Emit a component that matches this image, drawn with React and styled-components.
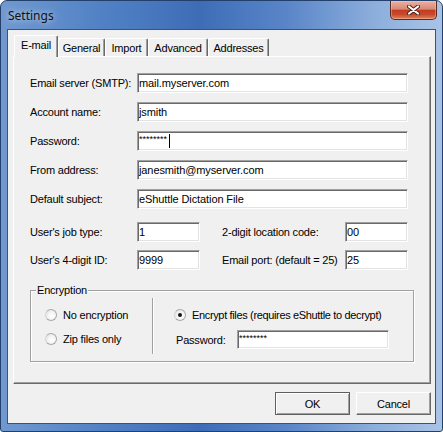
import React from 'react';
import styled, { createGlobalStyle } from 'styled-components';

const GlobalStyle = createGlobalStyle`
  html, body {
    margin: 0;
    padding: 0;
    background: #fff;
    overflow: hidden;
  }
  body {
    font-family: "Liberation Sans", Arial, sans-serif;
    font-size: 11px;
    color: #000;
  }
  *, *::before, *::after {
    box-sizing: border-box;
  }
`;

// Window chrome
const Frame = styled.div`
  width: 443px;
  height: 432px;
  border: 1px solid #22406a;
  border-radius: 7px 7px 3px 3px;
  background: linear-gradient(90deg, #7199d0 0%, #5282c5 22%, #3e6db7 45%, #5a86c8 65%, #8dafdc 85%, #a9c3e6 100%);
  display: flex;
  flex-direction: column;
`;

const TitleBar = styled.div`
  height: 28px;
  flex-shrink: 0;
  display: flex;
  justify-content: space-between;
  align-items: flex-start;
  padding: 0 5px 0 7px;
`;

const Title = styled.span`
  margin-top: 7px;
  font-family: "Noto Sans", "Open Sans", sans-serif;
  font-size: 12px;
  line-height: 16px;
  color: #111;
  text-shadow: 0 0 6px rgba(255, 255, 255, 0.8);
`;

const CloseButton = styled.div`
  width: 47px;
  height: 19px;
  border: 1px solid #5a2a20;
  border-top: none;
  border-radius: 0 0 5px 5px;
  background: linear-gradient(180deg, #eab0a2 0%, #d98a76 45%, #c33c22 52%, #c84a2c 75%, #e28358 100%);
  box-shadow: inset 0 0 0 1px rgba(255, 220, 210, 0.35);
  display: flex;
  align-items: center;
  justify-content: center;
`;

const Client = styled.div`
  flex: 1;
  margin: 0 6px 7px 6px;
  border: 1px solid #36557c;
  background: #f0f0f0;
  padding: 5px 4px 0 5px;
  display: flex;
  flex-direction: column;
`;

// Tabs
const TabStrip = styled.div`
  height: 21px;
  display: flex;
  align-items: flex-end;
  padding-left: 1px;
  position: relative;
  z-index: 1;
`;

const Tab = styled.div`
  width: ${p => p.$w}px;
  height: ${p => (p.$active ? 22 : 18)}px;
  margin-bottom: ${p => (p.$active ? -1 : 0)}px;
  background: #f0f0f0;
  border-top: 1px solid #fff;
  border-left: 1px solid #fff;
  border-right: 1px solid #696969;
  border-radius: 2px 2px 0 0;
  box-shadow: inset -1px 0 0 #a0a0a0;
  display: flex;
  align-items: center;
  justify-content: center;
  padding-bottom: ${p => (p.$active ? 3 : 0)}px;
  letter-spacing: -0.2px;
`;

const Panel = styled.div`
  height: 328px;
  border-top: 1px solid #fff;
  border-left: 1px solid #fff;
  border-right: 1px solid #696969;
  border-bottom: 1px solid #696969;
  box-shadow: inset -1px -1px 0 #a0a0a0;
  padding: 16px 22px 0 16px;
  display: flex;
  flex-direction: column;
`;

// Form parts
const Fields = styled.div`
  display: grid;
  grid-template-columns: 107px 1fr;
  grid-auto-rows: 20px;
  row-gap: 9px;
  align-items: center;
`;

const ShortFields = styled.div`
  margin-top: 13px;
  display: grid;
  grid-template-columns: 107px 63px 1fr 63px;
  grid-auto-rows: 20px;
  row-gap: 8px;
  align-items: center;
`;

const Label = styled.span`
  letter-spacing: -0.2px;
  white-space: nowrap;
  padding-left: ${p => p.$indent || 0}px;
`;

const TextBox = styled.div`
  height: ${p => p.$h || 20}px;
  width: ${p => (p.$w ? `${p.$w}px` : 'auto')};
  background: #fff;
  border: 1px solid;
  border-color: #a0a0a0 #fff #fff #a0a0a0;
  box-shadow: inset 1px 1px 0 #696969, inset -1px -1px 0 #e3e3e3;
  padding: 0 2px 0 1px;
  display: flex;
  align-items: center;
  white-space: nowrap;
  overflow: hidden;
  letter-spacing: -0.1px;
`;

const Stars = styled.span`
  font-size: 9px;
  letter-spacing: 0;
  align-self: flex-start;
  margin-top: 2px;
`;

const Caret = styled.span`
  display: inline-block;
  width: 1px;
  height: 14px;
  background: #000;
  margin-left: 2px;
`;

// Group box
const GroupBox = styled.div`
  position: relative;
  margin-top: 20px;
  width: 384px;
  height: 72px;
  border: 1px solid #a0a0a0;
  box-shadow: 1px 1px 0 #fff, inset 1px 1px 0 #fff;
`;

const Legend = styled.span`
  position: absolute;
  top: -7px;
  left: 5px;
  padding: 0 1px;
  line-height: 13px;
  background: #f0f0f0;
  letter-spacing: -0.2px;
`;

const GroupColumns = styled.div`
  height: 100%;
  padding: 7px 0;
  display: flex;
`;

const LeftCol = styled.div`
  width: 122px;
  flex-shrink: 0;
  border-right: 1px solid #a0a0a0;
  box-shadow: 1px 0 0 #fff;
  padding: 9px 0 0 14px;
  display: flex;
  flex-direction: column;
  gap: 8px;
`;

const RightCol = styled.div`
  flex: 1;
  padding: 9px 0 0 21px;
  display: flex;
  flex-direction: column;
  gap: 7px;
`;

const RadioRow = styled.div`
  height: 16px;
  display: flex;
  align-items: center;
  gap: 6px;
  letter-spacing: ${p => (p.$tight ? -0.35 : -0.2)}px;
  white-space: nowrap;
`;

const RadioDot = styled.span`
  width: 12px;
  height: 12px;
  border-radius: 50%;
  border: 1px solid #a7a7a7;
  border-left-color: #d2d2d2;
  background: radial-gradient(circle at 60% 60%, #ffffff 0%, #f4f4f4 45%, #d9d9d9 100%);
  display: flex;
  align-items: center;
  justify-content: center;
  flex-shrink: 0;

  &::after {
    content: '';
    width: 4px;
    height: 4px;
    border-radius: 50%;
    background: ${p => (p.$checked ? '#151515' : 'transparent')};
  }
`;

const PasswordRow = styled.div`
  display: flex;
  align-items: center;
  padding-left: 2px;
`;

const PasswordLabel = styled.span`
  width: 61px;
  letter-spacing: -0.2px;
`;

// Buttons
const ButtonRow = styled.div`
  margin-top: 8px;
  display: flex;
  justify-content: flex-end;
  gap: 6px;
`;

const Button = styled.div`
  width: 75px;
  height: 23px;
  background: #f0f0f0;
  border: 1px solid;
  border-color: ${p => (p.$default ? '#5f5f5f' : '#fff #696969 #696969 #fff')};
  box-shadow: ${p =>
    p.$default
      ? 'inset 1px 1px 0 #fff, inset -1px -1px 0 #a0a0a0'
      : 'inset -1px -1px 0 #a0a0a0'};
  display: flex;
  align-items: center;
  justify-content: center;
  letter-spacing: -0.2px;
`;

function CloseGlyph() {
  return (
    <svg width="13" height="10" viewBox="0 0 13 10">
      <path d="M2 1.5 L11 8.5 M11 1.5 L2 8.5" stroke="#4a2018" strokeWidth="4" strokeLinecap="round" />
      <path d="M2 1.5 L11 8.5 M11 1.5 L2 8.5" stroke="#fff" strokeWidth="2.2" strokeLinecap="round" />
    </svg>
  );
}

const tabs = [
  { name: 'E-mail', w: 44 },
  { name: 'General', w: 47 },
  { name: 'Import', w: 43 },
  { name: 'Advanced', w: 60 },
  { name: 'Addresses', w: 61 },
];

const fields = [
  { label: 'Email server (SMTP):', value: 'mail.myserver.com' },
  { label: 'Account name:', value: 'jsmith' },
  { label: 'Password:', password: true },
  { label: 'From address:', value: 'janesmith@myserver.com' },
  { label: 'Default subject:', value: 'eShuttle Dictation File' },
];

export default function App() {
  return (
    <>
      <GlobalStyle />
      <Frame>
        <TitleBar>
          <Title>Settings</Title>
          <CloseButton>
            <CloseGlyph />
          </CloseButton>
        </TitleBar>
        <Client>
          <TabStrip>
            {tabs.map((t, i) => (
              <Tab key={t.name} $w={t.w} $active={i === 0}>
                {t.name}
              </Tab>
            ))}
          </TabStrip>
          <Panel>
            <Fields>
              {fields.map(f => (
                <React.Fragment key={f.label}>
                  <Label>{f.label}</Label>
                  <TextBox>
                    {f.password ? (
                      <>
                        <Stars>********</Stars>
                        <Caret />
                      </>
                    ) : (
                      f.value
                    )}
                  </TextBox>
                </React.Fragment>
              ))}
            </Fields>
            <ShortFields>
              <Label>User's job type:</Label>
              <TextBox>1</TextBox>
              <Label $indent={22}>2-digit location code:</Label>
              <TextBox>00</TextBox>
              <Label>User's 4-digit ID:</Label>
              <TextBox>9999</TextBox>
              <Label $indent={22}>Email port: (default = 25)</Label>
              <TextBox>25</TextBox>
            </ShortFields>
            <GroupBox>
              <Legend>Encryption</Legend>
              <GroupColumns>
                <LeftCol>
                  <RadioRow>
                    <RadioDot />
                    No encryption
                  </RadioRow>
                  <RadioRow>
                    <RadioDot />
                    Zip files only
                  </RadioRow>
                </LeftCol>
                <RightCol>
                  <RadioRow $tight>
                    <RadioDot $checked />
                    Encrypt files (requires eShuttle to decrypt)
                  </RadioRow>
                  <PasswordRow>
                    <PasswordLabel>Password:</PasswordLabel>
                    <TextBox $w={152} $h={19}>
                      <Stars>********</Stars>
                    </TextBox>
                  </PasswordRow>
                </RightCol>
              </GroupColumns>
            </GroupBox>
          </Panel>
          <ButtonRow>
            <Button $default>OK</Button>
            <Button>Cancel</Button>
          </ButtonRow>
        </Client>
      </Frame>
    </>
  );
}
